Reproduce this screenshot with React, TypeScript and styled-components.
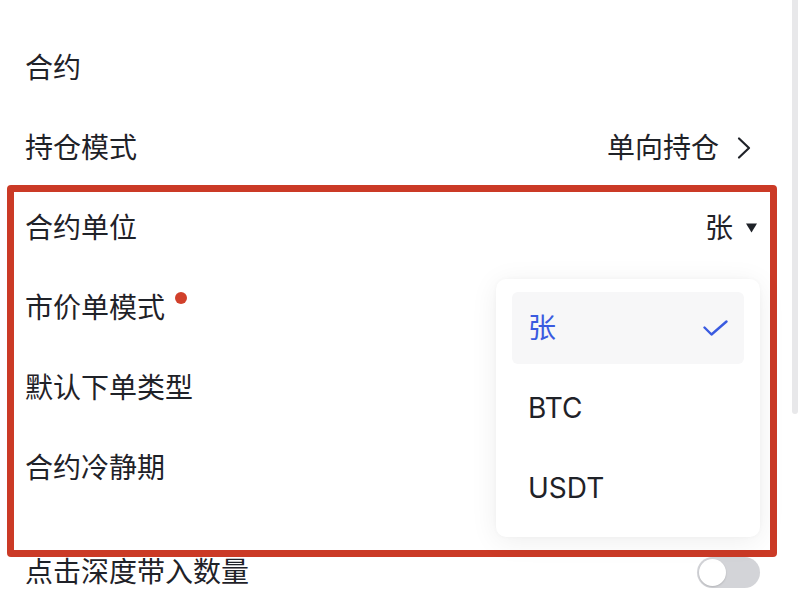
import React from "react";
import styled, { createGlobalStyle } from "styled-components";

const Global = createGlobalStyle`
  html, body { margin: 0; padding: 0; background: #ffffff; }
  body {
    font-family: "Inter", "Noto Sans CJK SC", "Noto Sans", sans-serif;
    color: #1f2228;
    -webkit-font-smoothing: antialiased;
  }
`;

const Page = styled.div`
  position: relative;
  width: 798px;
  height: 612px;
  overflow: hidden;
  box-sizing: border-box;
  padding: 28px 41px 0 25px;
  background: #fff;
`;

const Row = styled.div<{ $gapTop?: number }>`
  display: flex;
  align-items: center;
  justify-content: space-between;
  height: 80px;
  margin-top: ${(p) => p.$gapTop ?? 0}px;
  font-size: 28px;
  line-height: 1;
`;

const Title = styled(Row)`
  font-weight: 400;
`;

const Label = styled.div`
  display: flex;
  align-items: center;
`;

const Value = styled.div`
  display: flex;
  align-items: center;
`;

const Dot = styled.span`
  display: inline-block;
  width: 12px;
  height: 12px;
  border-radius: 50%;
  background: #d1402b;
  margin-left: 10px;
  margin-top: -20px;
`;

const IconBox = styled.span<{ $ml: number; $mr?: number }>`
  display: inline-flex;
  margin-left: ${(p) => p.$ml}px;
  margin-right: ${(p) => p.$mr ?? 0}px;
`;

const Toggle = styled.div`
  position: relative;
  width: 63px;
  height: 31px;
  margin-right: -3px;
  border-radius: 16px;
  background: #d3d4d8;
  box-sizing: border-box;
  padding: 2px;
  display: flex;
  align-items: center;
`;

const Knob = styled.div`
  width: 27px;
  height: 27px;
  border-radius: 50%;
  background: #fff;
  box-shadow: 0 1px 2px rgba(0, 0, 0, 0.15);
`;

const Highlight = styled.div`
  position: absolute;
  left: 7px;
  top: 185px;
  width: 770px;
  height: 372px;
  box-sizing: border-box;
  border: 7px solid #cb3a26;
  border-radius: 4px;
  pointer-events: none;
`;

const Menu = styled.div`
  position: absolute;
  left: 496px;
  top: 279px;
  width: 264px;
  box-sizing: border-box;
  padding: 13px 16px;
  background: #fff;
  border-radius: 10px;
  box-shadow: 0 4px 28px rgba(0, 0, 0, 0.07), 0 0 4px rgba(0, 0, 0, 0.03);
  display: flex;
  flex-direction: column;
  gap: 8px;
`;

const MenuItem = styled.div<{ $active?: boolean }>`
  height: 72px;
  box-sizing: border-box;
  padding: 0 16px;
  border-radius: 6px;
  display: flex;
  align-items: center;
  justify-content: space-between;
  font-size: 28px;
  line-height: 1;
  background: ${(p) => (p.$active ? "#f7f7f8" : "transparent")};
  color: ${(p) => (p.$active ? "#3a5be0" : "#1f2228")};
`;

const ScrollThumb = styled.div`
  position: absolute;
  right: 0;
  top: 0;
  width: 6px;
  height: 414px;
  background: #e8e8ea;
  border-radius: 0 0 3px 3px;
`;

const Chevron = () => (
  <svg width="14" height="24" viewBox="0 0 14 24" fill="none">
    <path d="M2 2.5 L12 12 L2 21.5" stroke="#1f2228" strokeWidth="2.2" strokeLinecap="round" strokeLinejoin="round" />
  </svg>
);

const Caret = () => (
  <svg width="11" height="10" viewBox="0 0 11 10">
    <path d="M0 0.5 H11 L5.5 9.5 Z" fill="#1f2228" />
  </svg>
);

const Check = () => (
  <svg width="25" height="17" viewBox="0 0 25 17" fill="none">
    <path d="M1.5 7.5 L8.5 14.5 L23.5 1.5" stroke="#3a5be0" strokeWidth="2.4" strokeLinecap="round" strokeLinejoin="round" />
  </svg>
);

export default function App() {
  return (
    <>
      <Global />
      <Page>
        <Title>合约</Title>
        <Row>
          <Label>持仓模式</Label>
          <Value>
            单向持仓
            <IconBox $ml={18} $mr={6}>
              <Chevron />
            </IconBox>
          </Value>
        </Row>
        <Row>
          <Label>合约单位</Label>
          <Value>
            张
            <IconBox $ml={13}>
              <Caret />
            </IconBox>
          </Value>
        </Row>
        <Row>
          <Label>
            市价单模式
            <Dot />
          </Label>
        </Row>
        <Row>
          <Label>默认下单类型</Label>
        </Row>
        <Row>
          <Label>合约冷静期</Label>
        </Row>
        <Row $gapTop={24}>
          <Label>点击深度带入数量</Label>
          <Toggle>
            <Knob />
          </Toggle>
        </Row>
        <Highlight />
        <Menu>
          <MenuItem $active>
            张
            <Check />
          </MenuItem>
          <MenuItem>BTC</MenuItem>
          <MenuItem>USDT</MenuItem>
        </Menu>
        <ScrollThumb />
      </Page>
    </>
  );
}
